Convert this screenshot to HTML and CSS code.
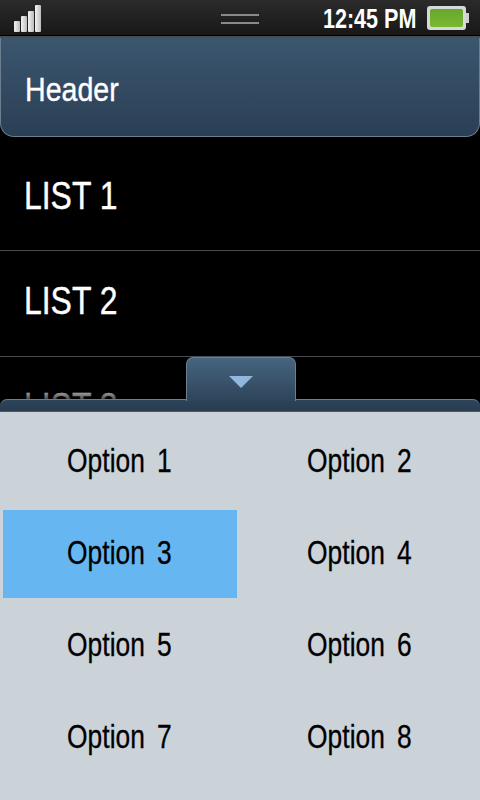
FILE: index.html
```html
<!DOCTYPE html>
<html lang="en">
<head>
  <meta charset="UTF-8">
  <title>Option menu</title>
  <link rel="stylesheet" href="styles.css">
</head>
<body>
  <div class="screen">
    <div class="status-bar">
      <div class="signal">
        <span class="bar bar-1"></span>
        <span class="bar bar-2"></span>
        <span class="bar bar-3"></span>
        <span class="bar bar-4"></span>
      </div>
      <div class="grip"></div>
      <div class="status-right">
        <span class="clock">12:45 PM</span>
        <div class="battery"><div class="battery-fill"></div></div>
      </div>
    </div>

    <div class="header"><span class="narrow">Header</span></div>

    <div class="list">
      <div class="list-item"><span class="narrow">LIST 1</span></div>
      <div class="list-item"><span class="narrow">LIST 2</span></div>
      <div class="list-item"><span class="narrow">LIST 3</span></div>
    </div>

    <div class="panel">
      <div class="panel-tab"><span class="panel-arrow"></span></div>
      <div class="panel-bar"></div>
      <div class="options">
        <div class="option"><span class="narrow-center">Option 1</span></div>
        <div class="option"><span class="narrow-center">Option 2</span></div>
        <div class="option selected"><span class="narrow-center">Option 3</span></div>
        <div class="option"><span class="narrow-center">Option 4</span></div>
        <div class="option"><span class="narrow-center">Option 5</span></div>
        <div class="option"><span class="narrow-center">Option 6</span></div>
        <div class="option"><span class="narrow-center">Option 7</span></div>
        <div class="option"><span class="narrow-center">Option 8</span></div>
      </div>
    </div>
  </div>
</body>
</html>
```

FILE: styles.css
```css
html, body {
  margin: 0;
  padding: 0;
  background-color: #000;
}

.screen {
  position: relative;
  width: 480px;
  height: 800px;
  overflow: hidden;
  font-family: "Liberation Sans", sans-serif;
  color: #fff;
}

/* the reference font is condensed, none is installed */
.narrow {
  display: inline-block;
  transform: scaleX(0.84);
  transform-origin: left center;
  -webkit-text-stroke: 0.4px currentColor;
}

.narrow-center {
  display: inline-block;
  transform: scaleX(0.8);
  transform-origin: center;
  word-spacing: 6px;
  -webkit-text-stroke: 0.3px currentColor;
}

/* status bar */
.status-bar {
  box-sizing: border-box;
  height: 38px;
  display: grid;
  grid-template-columns: 1fr auto 1fr;
  align-items: center;
  padding: 0 14px 0 14px;
  background: linear-gradient(#2b2b2b, #171717);
  border-bottom: 2px solid #4c4c4c;
  box-shadow: inset 0 -1px 0 #000;
}

.signal {
  display: flex;
  align-items: flex-end;
  gap: 1px;
  height: 27px;
  margin-top: 1px;
}

.bar {
  width: 6px;
  border-radius: 1px;
  background: linear-gradient(90deg, #f2f2f2, #bdbdbd);
}

.bar-1 { height: 11px; }
.bar-2 { height: 16px; }
.bar-3 { height: 21px; }
.bar-4 { height: 27px; }

.grip {
  width: 38px;
  height: 6px;
  margin-top: 1px;
  border-top: 2px solid #8a8a8a;
  border-bottom: 2px solid #8a8a8a;
}

.status-right {
  display: flex;
  justify-content: flex-end;
  align-items: center;
  gap: 11px;
}

.clock {
  margin-top: 2px;
  font-size: 28px;
  font-weight: bold;
  line-height: 30px;
  transform: scaleX(0.77);
  transform-origin: right center;
}

.battery {
  position: relative;
  box-sizing: border-box;
  width: 39px;
  height: 24px;
  padding: 3px;
  border-radius: 3px;
  background-color: #d8d8d6;
}

.battery::after {
  content: "";
  position: absolute;
  right: -3px;
  top: 7px;
  width: 3px;
  height: 10px;
  background-color: #cfcfcf;
}

.battery-fill {
  height: 100%;
  border-radius: 2px;
  background: linear-gradient(#66a82c, #79b832);
}

/* header */
.header {
  box-sizing: border-box;
  height: 99px;
  padding: 4px 24px 0;
  display: flex;
  align-items: center;
  font-size: 34px;
  background: linear-gradient(#3b566f, #2a3f55);
  border: 1px solid #6b7f90;
  border-top: none;
  border-radius: 0 0 14px 14px;
}

/* list */
.list-item {
  box-sizing: border-box;
  height: 106px;
  padding: 0 24px 4px;
  display: flex;
  align-items: center;
  font-size: 38px;
  border-bottom: 1px solid #4a4a50;
}

.list-item:first-child {
  height: 114px;
  padding-top: 6px;
  padding-bottom: 0;
}

/* bottom panel */
.panel {
  position: absolute;
  left: 0;
  right: 0;
  top: 399px;
  bottom: 0;
  display: flex;
  flex-direction: column;
}

.panel::before {
  content: "";
  position: absolute;
  left: 0;
  right: 0;
  top: -14px;
  height: 14px;
  background: linear-gradient(rgba(0, 0, 0, 0), rgba(0, 0, 0, 0.7));
}

.panel-tab {
  position: absolute;
  left: 186px;
  top: -42px;
  box-sizing: border-box;
  width: 110px;
  height: 44px;
  display: flex;
  justify-content: center;
  padding-top: 18px;
  border: 1px solid #6b7f90;
  border-bottom: none;
  border-radius: 7px 7px 0 0;
  background: linear-gradient(#466580, #2e4459);
  z-index: 1;
}

.panel-arrow {
  width: 0;
  height: 0;
  border-left: 12px solid transparent;
  border-right: 12px solid transparent;
  border-top: 12px solid #90b8de;
}

.panel-bar {
  box-sizing: border-box;
  height: 13px;
  background: linear-gradient(#2e4459, #283c50);
  border-top: 1px solid #6b7f90;
  border-bottom: 1px solid #4a5a68;
  border-radius: 7px 7px 0 0;
}

.options {
  flex: 1;
  display: grid;
  grid-template-columns: 234px 1fr;
  grid-auto-rows: 88px;
  row-gap: 4px;
  padding: 6px 0 0 3px;
  background-color: #cbd2d8;
}

.option {
  display: flex;
  align-items: center;
  justify-content: center;
  padding-bottom: 2px;
  box-sizing: border-box;
  font-size: 33px;
  color: #000;
}

.option:nth-child(odd) {
  padding-right: 2px;
}

.option:nth-child(even) {
  padding-left: 2px;
}

.option.selected {
  background-color: #66b7f1;
}
```
